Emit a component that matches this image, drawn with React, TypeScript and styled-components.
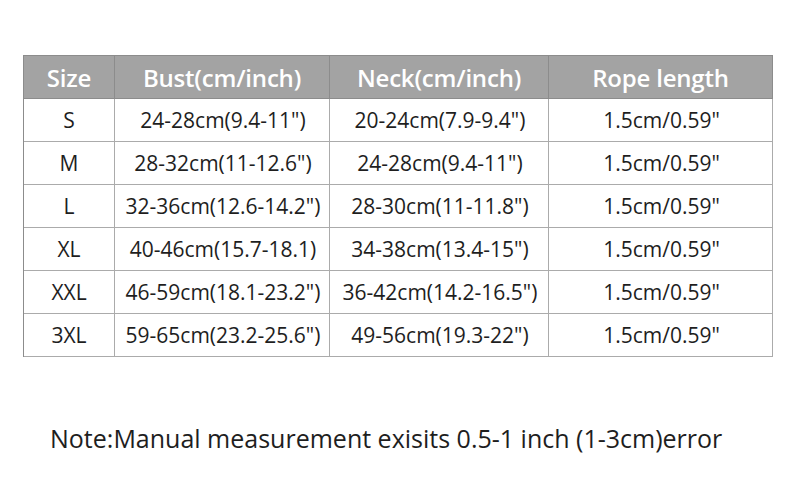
import React from 'react';
import styled, { createGlobalStyle } from 'styled-components';

const GlobalStyle = createGlobalStyle`
	html, body {
		margin: 0;
		padding: 0;
		background: #ffffff;
	}
	body {
		font-family: 'Open Sans', 'Liberation Sans', sans-serif;
		color: #1e1e1e;
	}
`;

const headers = ['Size', 'Bust(cm/inch)', 'Neck(cm/inch)', 'Rope length'];

const rows = [
	['S', '24-28cm(9.4-11")', '20-24cm(7.9-9.4")', '1.5cm/0.59"'],
	['M', '28-32cm(11-12.6")', '24-28cm(9.4-11")', '1.5cm/0.59"'],
	['L', '32-36cm(12.6-14.2")', '28-30cm(11-11.8")', '1.5cm/0.59"'],
	['XL', '40-46cm(15.7-18.1)', '34-38cm(13.4-15")', '1.5cm/0.59"'],
	['XXL', '46-59cm(18.1-23.2")', '36-42cm(14.2-16.5")', '1.5cm/0.59"'],
	['3XL', '59-65cm(23.2-25.6")', '49-56cm(19.3-22")', '1.5cm/0.59"'],
];

const App = () => {
	return (
		<Page>
			<GlobalStyle />
			<SizeTable>
				{headers.map((h) => (
					<HeadCell key={h}>{h}</HeadCell>
				))}
				{rows.map((row) =>
					row.map((value, i) => (
						<Cell key={row[0] + i} $first={i === 0}>
							{value}
						</Cell>
					)),
				)}
			</SizeTable>
			<Note>Note:Manual measurement exisits 0.5-1 inch (1-3cm)error</Note>
		</Page>
	);
};

export default App;

// styles
const Page = styled.div`
	width: 800px;
	height: 492px;
	padding-top: 55px;
	box-sizing: border-box;
`;

const SizeTable = styled.div`
	display: grid;
	grid-template-columns: 91px 215px 219px 224px;
	grid-auto-rows: 43px;
	width: 750px;
	margin-left: 23px;
	border-top: 1px solid #8c8c8c;
	border-left: 1px solid #8c8c8c;
	box-sizing: border-box;
`;

const HeadCell = styled.div`
	display: flex;
	align-items: center;
	justify-content: center;
	background: #a3a3a3;
	color: #ffffff;
	font-weight: 600;
	font-size: 24px;
	letter-spacing: -0.2px;
	border-right: 1px solid #8c8c8c;
	border-bottom: 1px solid #8c8c8c;
`;

const Cell = styled.div<{ $first?: boolean }>`
	display: flex;
	align-items: center;
	justify-content: center;
	font-size: 21px;
	color: #1e1e1e;
	border-right: 1px solid #ababab;
	border-bottom: 1px solid #ababab;
	padding-left: ${(p) => (p.$first ? '0' : '2px')};
`;

const Note = styled.div`
	margin-top: 64px;
	margin-left: 50px;
	font-size: 25px;
	color: #1e1e1e;
`;
